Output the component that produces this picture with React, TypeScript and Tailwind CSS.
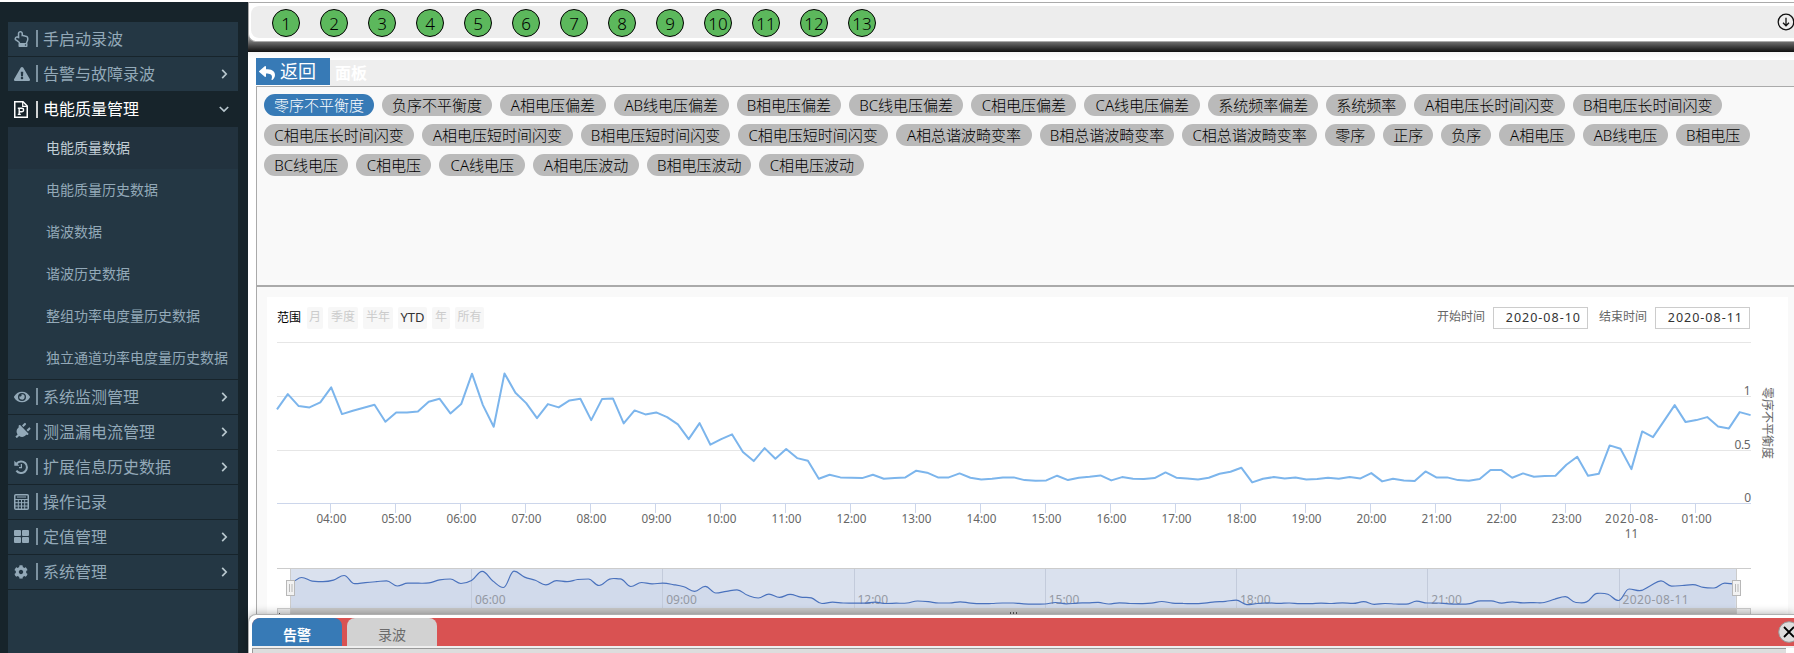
import type { ReactNode } from 'react'
import clsx from 'clsx'
import {
  FaCog,
  FaExclamationTriangle,
  FaEye,
  FaPlug,
  FaRegHandPointUp,
  FaReply,
} from 'react-icons/fa'

function ReportIcon() {
  return (
    <svg viewBox="0 0 14 17" className="w-3.5 h-[17px]" fill="none" stroke="currentColor" strokeWidth="1.5">
      <path d="M0.75 0.75H9L13.25 5v11.25H0.75z" />
      <path d="M8.7 1v4.3H13" strokeWidth="1.2" />
      <path d="M5.2 7.3v6.2M3.8 7.3h4.1a1.6 1.6 0 0 1 0 3.5H5.5M3.8 13.4h3" strokeWidth="1.4" />
    </svg>
  )
}

function HistoryIcon() {
  return (
    <svg viewBox="0 0 14 14" className="w-3.5 h-3.5" fill="none" stroke="currentColor">
      <path d="M2.6 3.6A5.8 5.8 0 1 1 2.4 10.6" strokeWidth="2" />
      <path d="M0.3 0.8v5h5z" fill="currentColor" stroke="none" />
      <path d="M7.4 4v3.6H5" strokeWidth="1.2" />
    </svg>
  )
}

function GridIcon() {
  return (
    <svg viewBox="0 0 15 16" className="w-[15px] h-4" fill="none" stroke="currentColor">
      <rect x="0.75" y="0.75" width="13.5" height="14.5" rx="1" strokeWidth="1.5" />
      <path d="M1 5.5h13M1 8.7h13M1 12h13M4.3 5.5v9.5M7.5 5.5v9.5M10.7 5.5v9.5M3 3h9" />
    </svg>
  )
}

function TilesIcon() {
  return (
    <svg viewBox="0 0 15 13" className="w-[15px] h-[13px]" fill="currentColor">
      <rect width="7" height="6" rx="1" />
      <rect x="8" width="7" height="6" rx="1" />
      <rect y="7" width="7" height="6" rx="1" />
      <rect x="8" y="7" width="7" height="6" rx="1" />
    </svg>
  )
}

function Angle({ open }: { open?: boolean }) {
  return (
    <svg viewBox="0 0 10 10" className="w-2.5 h-2.5 shrink-0" fill="none" stroke="#b8c7ce" strokeWidth="1.7">
      <path d={open ? 'M0.8 3l4.2 4 4.2-4' : 'M3.2 0.8l4 4.2-4 4.2'} />
    </svg>
  )
}

interface MenuItem {
  label: string
  icon: ReactNode
  arrow?: boolean
  children?: string[]
}

const MENU: MenuItem[] = [
  { label: '手启动录波', icon: <FaRegHandPointUp className="w-[15px] h-4" /> },
  { label: '告警与故障录波', icon: <FaExclamationTriangle className="w-4 h-4" />, arrow: true },
  {
    label: '电能质量管理',
    icon: <ReportIcon />,
    arrow: true,
    children: ['电能质量数据', '电能质量历史数据', '谐波数据', '谐波历史数据', '整组功率电度量历史数据', '独立通道功率电度量历史数据'],
  },
  { label: '系统监测管理', icon: <FaEye className="w-4 h-4" />, arrow: true },
  { label: '测温漏电流管理', icon: <FaPlug className="w-[18px] h-[17px] rotate-45" />, arrow: true },
  { label: '扩展信息历史数据', icon: <HistoryIcon />, arrow: true },
  { label: '操作记录', icon: <GridIcon /> },
  { label: '定值管理', icon: <TilesIcon />, arrow: true },
  { label: '系统管理', icon: <FaCog className="w-3.5 h-3.5" />, arrow: true },
]

const METRICS = [
  '零序不平衡度', '负序不平衡度', 'A相电压偏差', 'AB线电压偏差', 'B相电压偏差', 'BC线电压偏差', 'C相电压偏差',
  'CA线电压偏差', '系统频率偏差', '系统频率', 'A相电压长时间闪变', 'B相电压长时间闪变', 'C相电压长时间闪变',
  'A相电压短时间闪变', 'B相电压短时间闪变', 'C相电压短时间闪变', 'A相总谐波畸变率', 'B相总谐波畸变率',
  'C相总谐波畸变率', '零序', '正序', '负序', 'A相电压', 'AB线电压', 'B相电压', 'BC线电压', 'C相电压', 'CA线电压',
  'A相电压波动', 'B相电压波动', 'C相电压波动',
]

const LETTER_WIDTH: Record<string, number> = { A: 10.8, B: 9.2, C: 10.1 }
const pillWidth = (label: string) => [...label].reduce((w, c) => w + (LETTER_WIDTH[c] ?? 15), 20)

const RANGES = [
  { label: '月', width: 16 },
  { label: '季度', width: 30 },
  { label: '半年', width: 30 },
  { label: 'YTD', width: 29, active: true },
  { label: '年', width: 18 },
  { label: '所有', width: 29 },
]

// one reading every 10 minutes, 324 counts = 1.0
const READINGS = [
  282, 328, 292, 288, 303, 348, 268, 278, 287, 296, 245, 273, 273, 276, 305, 314, 270, 298, 389, 295, 230, 390, 332,
  301, 256, 298, 288, 309, 314, 250, 313, 315, 240, 279, 267, 273, 259, 237, 193, 241, 176, 193, 207, 154, 127, 166,
  134, 163, 136, 128, 74, 86, 78, 77, 76, 86, 74, 76, 78, 98, 92, 78, 78, 90, 77, 72, 74, 78, 78, 70, 68, 69, 83, 70,
  77, 80, 84, 69, 79, 74, 73, 76, 93, 77, 75, 72, 77, 89, 95, 107, 63, 74, 79, 75, 78, 72, 73, 77, 74, 79, 75, 91, 66,
  74, 69, 67, 96, 78, 78, 70, 68, 73, 100, 100, 77, 90, 80, 82, 83, 116, 140, 83, 89, 174, 164, 103, 216, 199, 247,
  295, 244, 250, 259, 231, 225, 274, 265,
]

const HOURS = [
  '04:00', '05:00', '06:00', '07:00', '08:00', '09:00', '10:00', '11:00', '12:00', '13:00', '14:00', '15:00', '16:00',
  '17:00', '18:00', '19:00', '20:00', '21:00', '22:00', '23:00', '2020-08-', '01:00',
]

const NAV_LABELS = ['06:00', '09:00', '12:00', '15:00', '18:00', '21:00', '2020-08-11']

const linePoints = READINGS.map((v, i) => `${(277 + i * 10.835).toFixed(1)},${(503.4 - v / 3).toFixed(1)}`).join(' ')

function navigatorPath() {
  const step = 10.62
  const xs = READINGS.map((_, i) => 291 + i * step)
  const ys = READINGS.map(v => 611 - v * 0.102)
  const slope = ys.map((y, i) => {
    if (i === 0 || i === ys.length - 1) return 0
    const a = y - ys[i - 1]
    const b = ys[i + 1] - y
    return a * b <= 0 ? 0 : (a + b) / 2
  })
  let d = `M${xs[0]},${ys[0]}`
  for (let i = 1; i < xs.length; i++) {
    const c1 = `${(xs[i - 1] + step * 0.4).toFixed(1)},${(ys[i - 1] + slope[i - 1] * 0.4).toFixed(1)}`
    const c2 = `${(xs[i] - step * 0.4).toFixed(1)},${(ys[i] - slope[i] * 0.4).toFixed(1)}`
    d += `C${c1} ${c2} ${xs[i].toFixed(1)},${ys[i].toFixed(1)}`
  }
  return d
}

function Handle({ x }: { x: number }) {
  return (
    <g stroke="#b8b8b8" fill="#f2f2f2">
      <rect x={x - 4} y="580.5" width="8" height="15" />
      <path d={`M${x - 1} 584v8M${x + 1.5} 584v8`} />
    </g>
  )
}

function Chart() {
  const nav = navigatorPath()
  return (
    <svg viewBox="267 330 1521 290" className="w-[1521px] h-[290px] block">
      {[342.5, 396.5, 450.5].map(y => (
        <path key={y} d={`M277 ${y}H1751`} stroke="#e6e6e6" />
      ))}
      <path d="M277 503.5H1751" stroke="#ccd6eb" />
      <polyline points={linePoints} fill="none" stroke="#7cb5ec" strokeWidth="2" strokeLinejoin="round" />

      <g fontSize="11.7" fill="#666" textAnchor="middle">
        {HOURS.map((h, i) => (
          <g key={h}>
            <path d={`M${Math.floor(330.5 + i * 65.01) + 0.5} 504v9`} stroke="#ccd6eb" />
            <text x={331.4 + i * 65.01} y="523.3" textLength={i === 20 ? 53 : 30}>{h}</text>
          </g>
        ))}
        <text x="1631.5" y="538">11</text>
      </g>
      <g fontSize="12" fill="#666" textAnchor="end">
        <text x="1750.5" y="394.5">1</text>
        <text x="1750.5" y="448.5" textLength="16">0.5</text>
        <text x="1751" y="501.5">0</text>
      </g>
      <text transform="translate(1762.5 423) rotate(90)" fontSize="12" fill="#666" textAnchor="middle">零序不平衡度</text>

      {/* navigator */}
      <rect x="290" y="569" width="1446" height="40" fill="#dae1ee" />
      <path d={`${nav}V609H291Z`} fill="#d1daeb" />
      {NAV_LABELS.map((t, i) => (
        <g key={t}>
          <path d={`M${Math.floor(471.5 + i * 191.25) + 0.5} 569v39`} stroke="#c3cbdb" />
          <text x={475 + i * 191.25} y="604" fontSize="12" fill="#9499a3" textLength={i === 6 ? 66 : 30.5}>{t}</text>
        </g>
      ))}
      <path d={nav} fill="none" stroke="#4a72bd" strokeWidth="1.2" />
      <path d="M277 568.5H1751M290.5 568.5v40M1736.5 568.5v40" stroke="#ccc" />
      <rect x="290" y="608" width="1446" height="14" fill="#c8c8c8" />
      <rect x="277.5" y="608.5" width="13" height="13" fill="#ebebeb" stroke="#ccc" />
      <rect x="1736.5" y="608.5" width="14" height="13" fill="#ebebeb" stroke="#ccc" />
      <path d="M1010.5 612v2M1013.5 612v2M1016.5 612v2M279 613.5h1" stroke="#555" />
      <Handle x={290.5} />
      <Handle x={1736.5} />
    </svg>
  )
}

function Sidebar() {
  return (
    <aside className="w-[248px] shrink-0 bg-[#17242b] pt-5 pl-2 pr-2.5">
      <nav className="h-full bg-[#243744] text-[#93a9b8]">
        {MENU.map(item => (
          <div key={item.label}>
            <div
              className={clsx(
                'h-[35px] flex items-center pl-1.5 pr-[9px] pb-px border-b border-[#17242b] text-base leading-none',
                item.children && 'h-[34px] border-b-0 bg-[#17242b] text-white',
              )}
            >
              <span className="w-4 shrink-0 flex justify-start">{item.icon}</span>
              <span className="w-0.5 h-[17px] ml-1.5 mr-[5px] shrink-0 bg-current opacity-80" />
              <span className="flex-1 whitespace-nowrap">{item.label}</span>
              {item.arrow && <Angle open={!!item.children} />}
            </div>
            {item.children && (
              <ul className="border-b border-[#17242b]">
                {item.children.map((child, i) => (
                  <li
                    key={child}
                    className={clsx('h-[42px] flex items-center pl-[38px] pb-px text-sm whitespace-nowrap', i === 0 && 'bg-[#22323e] text-[#c0cdd5]')}
                  >
                    {child}
                  </li>
                ))}
              </ul>
            )}
          </div>
        ))}
      </nav>
    </aside>
  )
}

function ChannelBar() {
  return (
    <div className="h-[50px] shrink-0 bg-linear-to-b from-[#888] from-75% to-[#111]">
      <div className="h-10 border border-r-0 border-[#aaa] rounded-bl-lg bg-white pt-[3px] pl-0.5">
        <div className="h-8 rounded-l-lg bg-[#ededed] flex items-center gap-5 pt-0.5 pl-[21px]">
          {Array.from({ length: 13 }, (_, i) => (
            <span
              key={i}
              className="w-7 h-7 shrink-0 rounded-full border border-black bg-[#5cb85c] text-black text-[17px] leading-[28px] text-center font-light"
            >
              {i + 1}
            </span>
          ))}
          <svg viewBox="0 0 18 18" className="w-[18px] h-[18px] shrink-0 ml-auto -mr-px -mt-0.5" fill="none" stroke="#111" strokeWidth="1.3">
            <circle cx="9" cy="9" r="7.8" />
            <path d="M9 4.8v7.8M6 9.8l3 3 3-3" />
          </svg>
        </div>
      </div>
    </div>
  )
}

function RangeSelector() {
  return (
    <div className="h-[33px] pt-2.5 pl-2.5 pr-[38px] flex items-start text-xs leading-5">
      <span className="w-[30px] pt-px text-black">范围</span>
      <div className="flex gap-[5px]">
        {RANGES.map(r => (
          <button
            key={r.label}
            style={{ width: r.width }}
            className={clsx(
              'h-[22px] pb-0.5 rounded-xs bg-[#f7f7f7] text-center whitespace-nowrap',
              r.active ? 'text-[#333] text-[13px]' : 'text-[#ccc]',
            )}
          >
            {r.label}
          </button>
        ))}
      </div>
      <div className="ml-auto flex text-[#666]">
        <span className="w-14">开始时间</span>
        <span className="w-[95px] h-[22px] border border-[#ccc] text-[#333] text-[12.5px] leading-[19px] tracking-[1px] text-right pr-1.5">2020-08-10</span>
        <span className="w-14 ml-[11px]">结束时间</span>
        <span className="w-[95px] h-[22px] border border-[#ccc] text-[#333] text-[12.5px] leading-[19px] tracking-[1px] text-right pr-1.5">2020-08-11</span>
      </div>
    </div>
  )
}

function AlarmDock() {
  return (
    <div className="absolute left-[248px] right-0 bottom-0 h-[39px] border-t border-l border-[#b0b0b0] rounded-tl-lg bg-white pt-[3px] pl-[3px] shadow-[0_0_10px_rgba(0,0,0,0.35)]">
      <div className="h-7 flex items-stretch gap-[5px] rounded-tl-lg bg-[#d95252] text-sm font-bold leading-[33px] text-center">
        <span className="w-[90px] rounded-t-lg bg-[#377ab6] text-white text-[14px]">告警</span>
        <span className="w-[90px] rounded-t-lg bg-[#d2d2d2] text-[#6b6b6b] font-normal">录波</span>
        <svg viewBox="0 0 22 22" className="w-[22px] h-[22px] ml-auto -mr-1.5 mt-[3px] shrink-0">
          <circle cx="11" cy="11" r="10.3" fill="#ddd" stroke="#999" />
          <path d="M6 6l10 10M16 6L6 16" stroke="#000" strokeWidth="1.8" />
        </svg>
      </div>
      <div className="h-0.5 bg-[#efefef]" />
      <div className="h-[5px] mr-2 border-t border-l border-[#999] bg-[#ddd]" />
    </div>
  )
}

export default function App() {
  return (
    <div className="relative w-[1794px] h-[653px] overflow-hidden bg-white pt-0.5 flex font-['Noto_Sans','Noto_Sans_CJK_SC',sans-serif]">
      <Sidebar />
      <main className="flex-1 min-w-0 flex flex-col">
        <ChannelBar />
        <div className="h-[34px] shrink-0 pl-2 flex items-end bg-linear-to-b from-[#f5f5f5] to-white to-20%">
          <button className="w-[74px] h-[27px] mb-px pl-[3px] flex items-center gap-[5px] bg-[#377ab6] text-white text-lg leading-none">
            <FaReply className="w-4 h-4 mt-0.5" />
            <span className="-mt-px whitespace-nowrap">返回</span>
          </button>
          <div className="flex-1 h-[26px] pl-[5px] bg-[#eee] text-white text-base leading-[26px] font-bold">面板</div>
        </div>
        <section className="ml-2 flex-1 border-t border-l border-[#aaa] bg-[#f9f9f9]">
          <div className="h-[200px] pt-[7px] pl-[7px] border-b-2 border-[#aaa]">
            <div className="flex flex-wrap gap-2">
              {METRICS.map((m, i) => (
                <span
                  key={m}
                  style={{ width: pillWidth(m) }}
                  className={clsx(
                    'h-[22px] rounded-full text-[15px] leading-[22px] text-center whitespace-nowrap font-light',
                    i === 0 ? 'bg-[#377ab6] text-white' : 'bg-[#bababa] text-black',
                  )}
                >
                  {m}
                </span>
              ))}
            </div>
          </div>
          <div className="ml-2.5 mr-1.5 mt-2.5 bg-white">
            <RangeSelector />
            <Chart />
          </div>
        </section>
      </main>
      <AlarmDock />
    </div>
  )
}
